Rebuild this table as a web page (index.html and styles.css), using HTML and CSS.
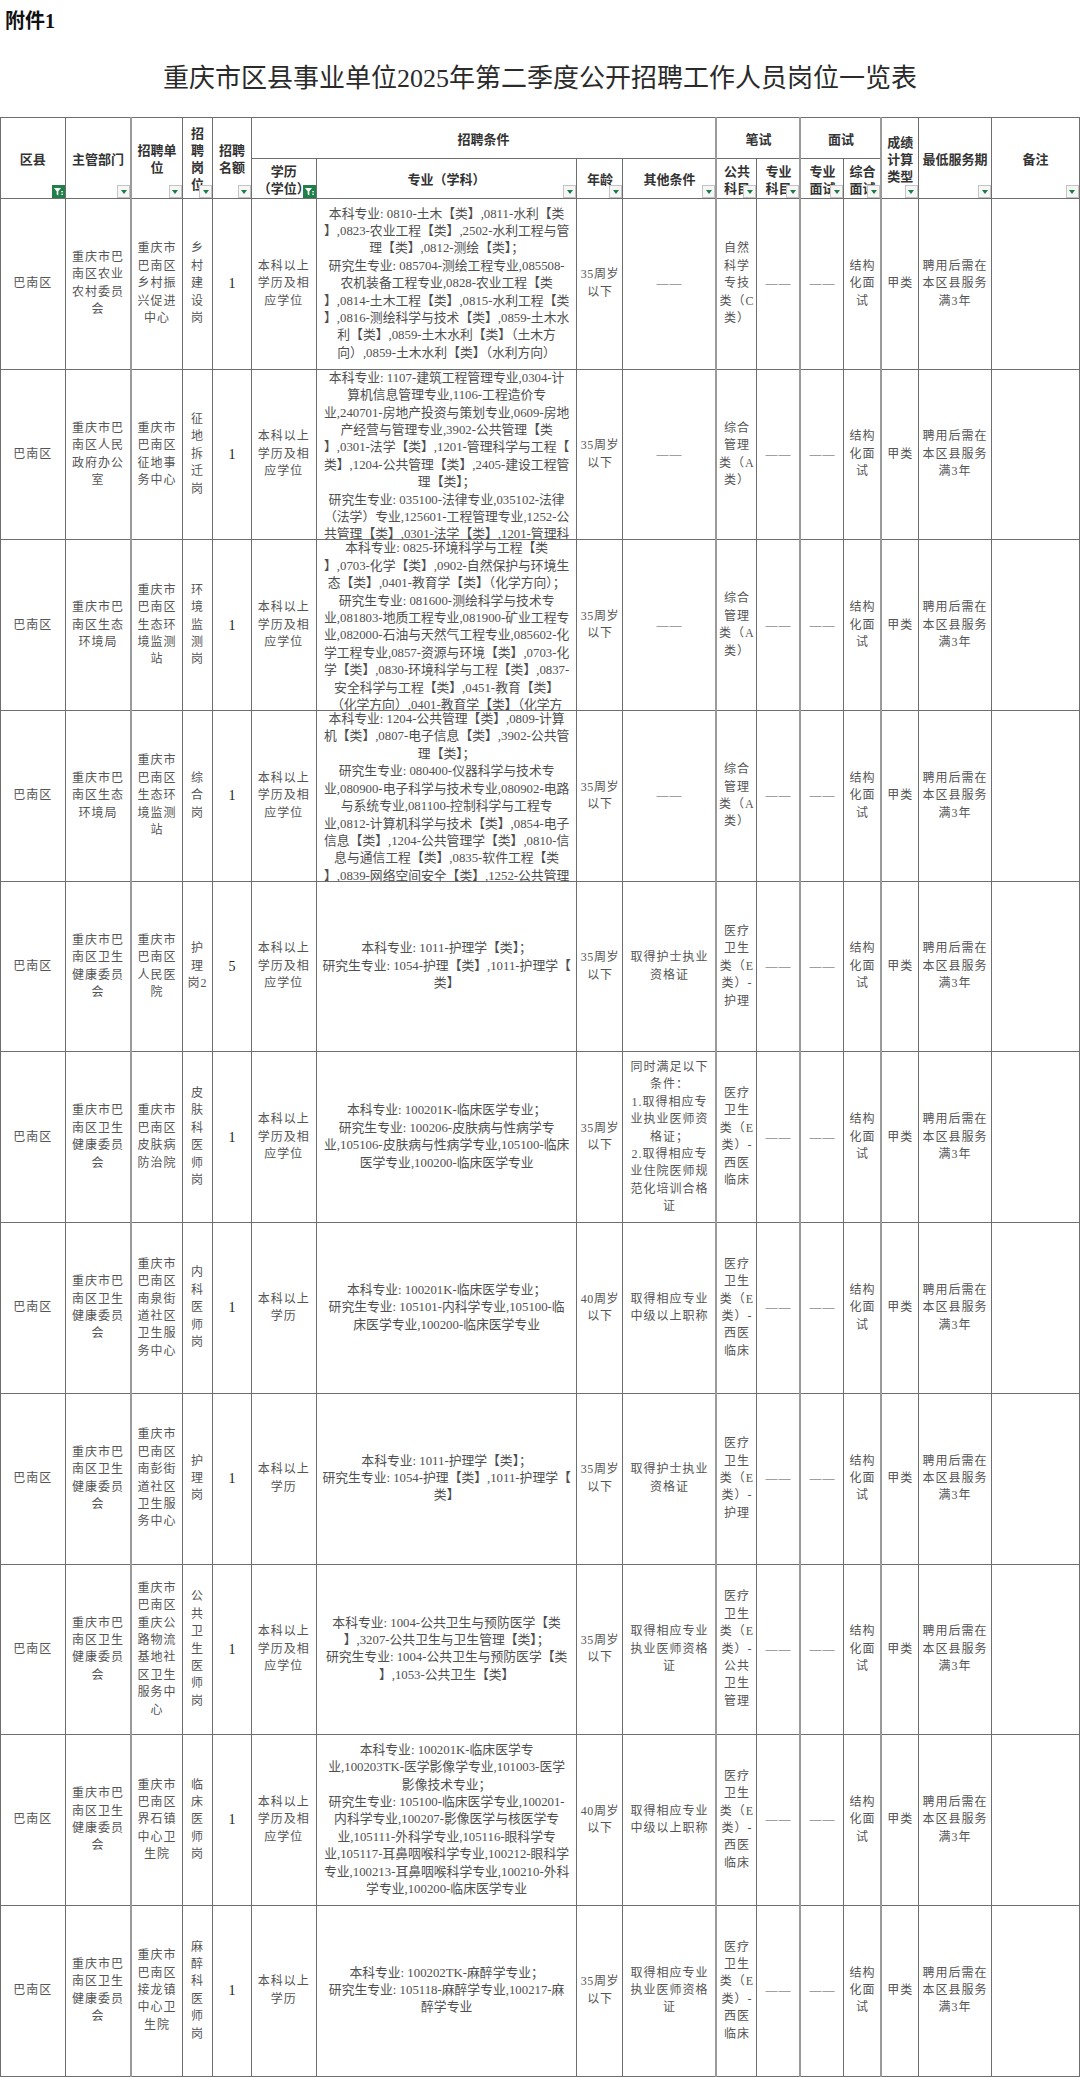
FILE: index.html
```html
<!DOCTYPE html>
<html lang="zh-CN">
<head>
<meta charset="utf-8">
<title>岗位一览表</title>
<link rel="stylesheet" href="styles.css">
</head>
<body>
<p class="doc-no">附件1</p>
<h1 class="doc-title">重庆市区县事业单位2025年第二季度公开招聘工作人员岗位一览表</h1>
<table class="grid">
<colgroup>
<col style="width:64.5px"><col style="width:66.3px"><col style="width:50.8px"><col style="width:30.8px"><col style="width:38.3px"><col style="width:65.1px"><col style="width:260.7px"><col style="width:46px"><col style="width:93.5px"><col style="width:40.3px"><col style="width:43.7px"><col style="width:43.4px"><col style="width:37.6px"><col style="width:36.8px"><col style="width:73.4px"><col style="width:87.8px">
</colgroup>
<thead>
<tr class="h1">
<th rowspan="2">区县<span class="dd on"><svg width="11" height="11" viewBox="0 0 11 11"><path d="M1 2h7L5.3 5.2v4.3L3.7 8.6V5.2z" fill="#fff"/><rect x="8.3" y="5" width="1.6" height="1.3" fill="#fff"/><rect x="8.3" y="7.6" width="1.6" height="1.3" fill="#fff"/></svg></span></th>
<th rowspan="2">主管部门<span class="dd"></span></th>
<th rowspan="2" class="gl">招聘单位<span class="dd"></span></th>
<th rowspan="2">招聘岗位<span class="dd"></span></th>
<th rowspan="2">招聘名额<span class="dd"></span></th>
<th colspan="4">招聘条件</th>
<th colspan="2" class="gl">笔试</th>
<th colspan="2" class="gl">面试</th>
<th rowspan="2" class="gl">成绩计算类型<span class="dd"></span></th>
<th rowspan="2">最低服务期<span class="dd"></span></th>
<th rowspan="2">备注<span class="dd"></span></th>
</tr>
<tr class="h2">
<th>学历<br>（学位）<span class="dd on"><svg width="11" height="11" viewBox="0 0 11 11"><path d="M1 2h7L5.3 5.2v4.3L3.7 8.6V5.2z" fill="#fff"/><rect x="8.3" y="5" width="1.6" height="1.3" fill="#fff"/><rect x="8.3" y="7.6" width="1.6" height="1.3" fill="#fff"/></svg></span></th>
<th>专业（学科）<span class="dd"></span></th>
<th>年龄<span class="dd"></span></th>
<th>其他条件<span class="dd"></span></th>
<th class="gl">公共科目<span class="dd"></span></th>
<th>专业科目<span class="dd"></span></th>
<th class="gl">专业面试<span class="dd"></span></th>
<th>综合面试<span class="dd"></span></th>
</tr>
</thead>
<tbody>
<tr>
<td>巴南区</td><td>重庆市巴南区农业农村委员会</td><td>重庆市巴南区乡村振兴促进中心</td><td>乡村建设岗</td><td class="num">1</td><td>本科以上学历及相应学位</td>
<td class="spec"><div class="c"><div class="t">本科专业: 0810-土木【类】,0811-水利【类<br>】,0823-农业工程【类】,2502-水利工程与管<br>理【类】,0812-测绘【类】；<br>研究生专业: 085704-测绘工程专业,085508-<br>农机装备工程专业,0828-农业工程【类<br>】,0814-土木工程【类】,0815-水利工程【类<br>】,0816-测绘科学与技术【类】,0859-土木水<br>利【类】,0859-土木水利【类】（土木方<br>向）,0859-土木水利【类】（水利方向）</div></div></td>
<td class="age">35周岁以下</td><td>——</td><td class="sub">自然<br>科学<br>专技<br>类（C<br>类）</td><td>——</td><td>——</td><td>结构化面试</td><td>甲类</td><td>聘用后需在本区县服务满3年</td><td></td>
</tr>
<tr>
<td>巴南区</td><td>重庆市巴南区人民政府办公室</td><td>重庆市巴南区征地事务中心</td><td>征地拆迁岗</td><td class="num">1</td><td>本科以上学历及相应学位</td>
<td class="spec"><div class="c"><div class="t">本科专业: 1107-建筑工程管理专业,0304-计<br>算机信息管理专业,1106-工程造价专<br>业,240701-房地产投资与策划专业,0609-房地<br>产经营与管理专业,3902-公共管理【类<br>】,0301-法学【类】,1201-管理科学与工程【<br>类】,1204-公共管理【类】,2405-建设工程管<br>理【类】；<br>研究生专业: 035100-法律专业,035102-法律<br>（法学）专业,125601-工程管理专业,1252-公<br>共管理【类】,0301-法学【类】,1201-管理科<br>学与工程【类】</div></div></td>
<td class="age">35周岁以下</td><td>——</td><td class="sub">综合<br>管理<br>类（A<br>类）</td><td>——</td><td>——</td><td>结构化面试</td><td>甲类</td><td>聘用后需在本区县服务满3年</td><td></td>
</tr>
<tr>
<td>巴南区</td><td>重庆市巴南区生态环境局</td><td>重庆市巴南区生态环境监测站</td><td>环境监测岗</td><td class="num">1</td><td>本科以上学历及相应学位</td>
<td class="spec"><div class="c"><div class="t">本科专业: 0825-环境科学与工程【类<br>】,0703-化学【类】,0902-自然保护与环境生<br>态【类】,0401-教育学【类】（化学方向）；<br>研究生专业: 081600-测绘科学与技术专<br>业,081803-地质工程专业,081900-矿业工程专<br>业,082000-石油与天然气工程专业,085602-化<br>学工程专业,0857-资源与环境【类】,0703-化<br>学【类】,0830-环境科学与工程【类】,0837-<br>安全科学与工程【类】,0451-教育【类】<br>（化学方向）,0401-教育学【类】（化学方<br>向）</div></div></td>
<td class="age">35周岁以下</td><td>——</td><td class="sub">综合<br>管理<br>类（A<br>类）</td><td>——</td><td>——</td><td>结构化面试</td><td>甲类</td><td>聘用后需在本区县服务满3年</td><td></td>
</tr>
<tr>
<td>巴南区</td><td>重庆市巴南区生态环境局</td><td>重庆市巴南区生态环境监测站</td><td>综合岗</td><td class="num">1</td><td>本科以上学历及相应学位</td>
<td class="spec"><div class="c"><div class="t">本科专业: 1204-公共管理【类】,0809-计算<br>机【类】,0807-电子信息【类】,3902-公共管<br>理【类】；<br>研究生专业: 080400-仪器科学与技术专<br>业,080900-电子科学与技术专业,080902-电路<br>与系统专业,081100-控制科学与工程专<br>业,0812-计算机科学与技术【类】,0854-电子<br>信息【类】,1204-公共管理学【类】,0810-信<br>息与通信工程【类】,0835-软件工程【类<br>】,0839-网络空间安全【类】,1252-公共管理<br>【类】</div></div></td>
<td class="age">35周岁以下</td><td>——</td><td class="sub">综合<br>管理<br>类（A<br>类）</td><td>——</td><td>——</td><td>结构化面试</td><td>甲类</td><td>聘用后需在本区县服务满3年</td><td></td>
</tr>
<tr>
<td>巴南区</td><td>重庆市巴南区卫生健康委员会</td><td>重庆市巴南区人民医院</td><td>护理岗2</td><td class="num">5</td><td>本科以上学历及相应学位</td>
<td class="spec"><div class="c"><div class="t">本科专业: 1011-护理学【类】；<br>研究生专业: 1054-护理【类】,1011-护理学【<br>类】</div></div></td>
<td class="age">35周岁以下</td><td>取得护士执业资格证</td><td class="sub">医疗<br>卫生<br>类（E<br>类）-<br>护理</td><td>——</td><td>——</td><td>结构化面试</td><td>甲类</td><td>聘用后需在本区县服务满3年</td><td></td>
</tr>
<tr>
<td>巴南区</td><td>重庆市巴南区卫生健康委员会</td><td>重庆市巴南区皮肤病防治院</td><td>皮肤科医师岗</td><td class="num">1</td><td>本科以上学历及相应学位</td>
<td class="spec"><div class="c"><div class="t">本科专业: 100201K-临床医学专业；<br>研究生专业: 100206-皮肤病与性病学专<br>业,105106-皮肤病与性病学专业,105100-临床<br>医学专业,100200-临床医学专业</div></div></td>
<td class="age">35周岁以下</td><td>同时满足以下<br>条件：<br>1.取得相应专业执业医师资格证；<br>2.取得相应专业住院医师规范化培训合格证</td><td class="sub">医疗<br>卫生<br>类（E<br>类）-<br>西医<br>临床</td><td>——</td><td>——</td><td>结构化面试</td><td>甲类</td><td>聘用后需在本区县服务满3年</td><td></td>
</tr>
<tr>
<td>巴南区</td><td>重庆市巴南区卫生健康委员会</td><td>重庆市巴南区南泉街道社区卫生服务中心</td><td>内科医师岗</td><td class="num">1</td><td>本科以上学历</td>
<td class="spec"><div class="c"><div class="t">本科专业: 100201K-临床医学专业；<br>研究生专业: 105101-内科学专业,105100-临<br>床医学专业,100200-临床医学专业</div></div></td>
<td class="age">40周岁以下</td><td>取得相应专业中级以上职称</td><td class="sub">医疗<br>卫生<br>类（E<br>类）-<br>西医<br>临床</td><td>——</td><td>——</td><td>结构化面试</td><td>甲类</td><td>聘用后需在本区县服务满3年</td><td></td>
</tr>
<tr>
<td>巴南区</td><td>重庆市巴南区卫生健康委员会</td><td>重庆市巴南区南彭街道社区卫生服务中心</td><td>护理岗</td><td class="num">1</td><td>本科以上学历</td>
<td class="spec"><div class="c"><div class="t">本科专业: 1011-护理学【类】；<br>研究生专业: 1054-护理【类】,1011-护理学【<br>类】</div></div></td>
<td class="age">35周岁以下</td><td>取得护士执业资格证</td><td class="sub">医疗<br>卫生<br>类（E<br>类）-<br>护理</td><td>——</td><td>——</td><td>结构化面试</td><td>甲类</td><td>聘用后需在本区县服务满3年</td><td></td>
</tr>
<tr>
<td>巴南区</td><td>重庆市巴南区卫生健康委员会</td><td>重庆市巴南区重庆公路物流基地社区卫生服务中心</td><td>公共卫生医师岗</td><td class="num">1</td><td>本科以上学历及相应学位</td>
<td class="spec"><div class="c"><div class="t">本科专业: 1004-公共卫生与预防医学【类<br>】,3207-公共卫生与卫生管理【类】；<br>研究生专业: 1004-公共卫生与预防医学【类<br>】,1053-公共卫生【类】</div></div></td>
<td class="age">35周岁以下</td><td>取得相应专业执业医师资格证</td><td class="sub">医疗<br>卫生<br>类（E<br>类）-<br>公共<br>卫生<br>管理</td><td>——</td><td>——</td><td>结构化面试</td><td>甲类</td><td>聘用后需在本区县服务满3年</td><td></td>
</tr>
<tr>
<td>巴南区</td><td>重庆市巴南区卫生健康委员会</td><td>重庆市巴南区界石镇中心卫生院</td><td>临床医师岗</td><td class="num">1</td><td>本科以上学历及相应学位</td>
<td class="spec"><div class="c"><div class="t">本科专业: 100201K-临床医学专<br>业,100203TK-医学影像学专业,101003-医学<br>影像技术专业；<br>研究生专业: 105100-临床医学专业,100201-<br>内科学专业,100207-影像医学与核医学专<br>业,105111-外科学专业,105116-眼科学专<br>业,105117-耳鼻咽喉科学专业,100212-眼科学<br>专业,100213-耳鼻咽喉科学专业,100210-外科<br>学专业,100200-临床医学专业</div></div></td>
<td class="age">40周岁以下</td><td>取得相应专业中级以上职称</td><td class="sub">医疗<br>卫生<br>类（E<br>类）-<br>西医<br>临床</td><td>——</td><td>——</td><td>结构化面试</td><td>甲类</td><td>聘用后需在本区县服务满3年</td><td></td>
</tr>
<tr>
<td>巴南区</td><td>重庆市巴南区卫生健康委员会</td><td>重庆市巴南区接龙镇中心卫生院</td><td>麻醉科医师岗</td><td class="num">1</td><td>本科以上学历</td>
<td class="spec"><div class="c"><div class="t">本科专业: 100202TK-麻醉学专业；<br>研究生专业: 105118-麻醉学专业,100217-麻<br>醉学专业</div></div></td>
<td class="age">35周岁以下</td><td>取得相应专业执业医师资格证</td><td class="sub">医疗<br>卫生<br>类（E<br>类）-<br>西医<br>临床</td><td>——</td><td>——</td><td>结构化面试</td><td>甲类</td><td>聘用后需在本区县服务满3年</td><td></td>
</tr>
</tbody>
</table>
</body>
</html>
```

FILE: styles.css
```css
* { box-sizing: border-box; }
body {
  margin: 0;
  background: #fff;
  font-family: "Liberation Serif", "Noto Sans CJK SC", serif;
  color: #555;
}
.doc-no {
  margin: 0;
  padding: 9px 0 0 5px;
  font: 700 20px/25px "Liberation Serif", "Noto Sans CJK SC", serif;
  color: #111;
}
.doc-title {
  margin: 28px 0 0;
  text-align: center;
  font: 400 26px/34px "Liberation Serif", "Noto Sans CJK SC", serif;
  color: #2a2a2a;
}
.grid {
  margin-top: 21px;
  border-collapse: collapse;
  table-layout: fixed;
  width: 1079px;
}
.grid th, .grid td {
  border: 1px solid #6e6e6e;
  text-align: center;
  vertical-align: middle;
  padding: 0 3px;
}
.grid th {
  position: relative;
  font: 700 13px/17px "Noto Sans CJK SC", sans-serif;
  color: #333;
  overflow: hidden;
}
.grid th.gl,
.grid tbody td:nth-child(3),
.grid tbody td:nth-child(10),
.grid tbody td:nth-child(12),
.grid tbody td:nth-child(14) {
  border-left: 2px solid #9a9a9a;
}
.h1 { height: 41px; }
.h2 { height: 40px; }
.grid td {
  font-size: 12px;
  line-height: 17.4px;
  letter-spacing: 1px;
  color: #555;
}
.grid td.num {
  font-size: 14px;
  letter-spacing: 0;
  color: #222;
}
.grid td.age {
  padding: 0 1px;
  letter-spacing: 0.6px;
}
.grid td.sub {
  padding: 0;
  white-space: nowrap;
}
.grid td.spec { padding: 0; }
.spec .c {
  height: 169.7px;
  display: flex;
  flex-direction: column;
  overflow: hidden;
}
.spec .t {
  margin: auto 0;
  font-size: 12.8px;
  line-height: 17.4px;
  letter-spacing: 0;
  white-space: nowrap;
  color: #4f4f4f;
}
.dd {
  position: absolute;
  right: 0;
  bottom: 0;
  width: 13px;
  height: 13px;
  border: 1px solid #c4c4c4;
  background: #f6f6f6;
}
.dd::after {
  content: "";
  position: absolute;
  left: 2.5px;
  top: 4px;
  border-left: 3.5px solid transparent;
  border-right: 3.5px solid transparent;
  border-top: 4px solid #1d7b46;
}
.dd.on {
  background: #21804a;
  border-color: #21804a;
}
.dd.on::after { display: none; }
.dd svg { display: block; }
```
